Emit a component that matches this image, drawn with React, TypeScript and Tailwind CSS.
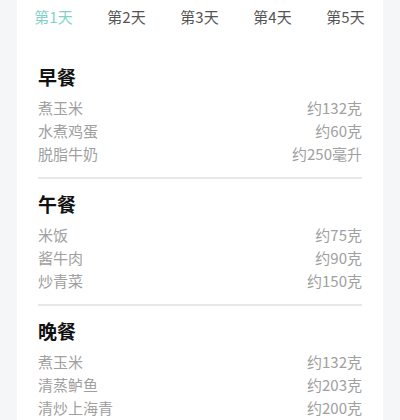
import React from "react";

const meals = [
  {
    title: "早餐",
    items: [
      ["煮玉米", "约132克"],
      ["水煮鸡蛋", "约60克"],
      ["脱脂牛奶", "约250毫升"],
    ],
  },
  {
    title: "午餐",
    items: [
      ["米饭", "约75克"],
      ["酱牛肉", "约90克"],
      ["炒青菜", "约150克"],
    ],
  },
  {
    title: "晚餐",
    items: [
      ["煮玉米", "约132克"],
      ["清蒸鲈鱼", "约203克"],
      ["清炒上海青", "约200克"],
    ],
  },
];

const tabs = ["第1天", "第2天", "第3天", "第4天", "第5天"];

export default function App() {
  return (
    <div
      className="w-[400px] h-[420px] overflow-hidden bg-[#f5f6f8] flex justify-center"
      style={{ fontFamily: '"Noto Sans CJK SC", "Noto Sans", sans-serif' }}
    >
      <div className="w-[366px] h-full bg-white flex flex-col">
        <div className="flex h-[32px] shrink-0">
          {tabs.map((t, i) => (
            <div
              key={t}
              className={`w-[73px] shrink-0 flex items-center justify-center text-[15px] leading-none ${
                i === 0 ? "text-[#7fd3c7]" : "text-[#555555]"
              }`}
            >
              {t}
            </div>
          ))}
        </div>
        <div className="h-[19px] shrink-0" />
        <div className="px-[21px] flex flex-col">
          {meals.map((m, idx) => (
            <React.Fragment key={m.title}>
              {idx > 0 && <div className="h-[2px] shrink-0 bg-[#e8e8e8]" />}
              <div className={`${idx === 0 ? "pt-[13px]" : "pt-[12px]"} pb-[12px]`}>
                <div className="h-[24px] flex items-center text-[19px] font-bold text-[#111111] leading-none">
                  {m.title}
                </div>
                <div className="mt-[8px] flex flex-col">
                  {m.items.map(([name, amt]) => (
                    <div
                      key={name}
                      className="h-[23px] flex items-center justify-between text-[15px] text-[#a0a0a0] leading-none"
                    >
                      <span>{name}</span>
                      <span>{amt}</span>
                    </div>
                  ))}
                </div>
              </div>
            </React.Fragment>
          ))}
        </div>
      </div>
    </div>
  );
}
